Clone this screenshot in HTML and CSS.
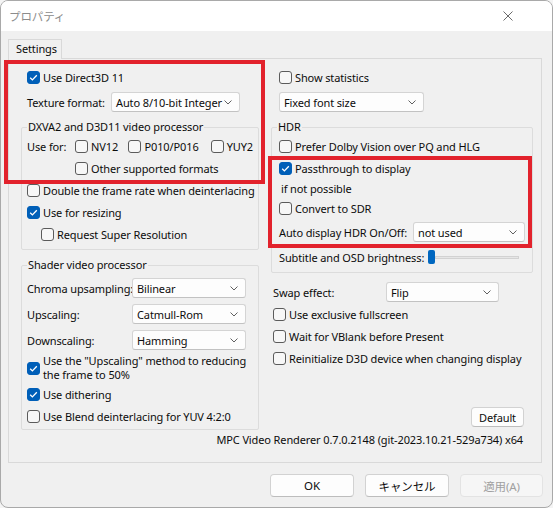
FILE: index.html
```html
<!DOCTYPE html>
<html>
<head>
<meta charset="utf-8">
<title>プロパティ</title>
<link rel="stylesheet" href="styles.css">
</head>
<body>
<div class="window">
	<div class="titlebar">
		<span class="title">プロパティ</span>
		<svg class="close" width="10" height="10" viewBox="0 0 10 10"><path d="M0.5 0.5 L9.5 9.5 M9.5 0.5 L0.5 9.5"/></svg>
	</div>

	<div class="client">
		<div class="tabs"><div class="tab">Settings</div></div>

		<div class="page">
			<div class="cols">

				<!-- left column: D3D11 + shader options -->
				<div class="col col-left">
					<div class="row row-top"><span class="cb on"><svg viewBox="0 0 13 13"><path d="M3.2 6.7 L5.4 8.9 L9.8 4.3"/></svg></span>Use Direct3D 11</div>
					<div class="row row-sel row-top row-tex">
						<span class="lbl lbl-tex">Texture format:</span>
						<span class="select sel-tex">Auto 8/10-bit Integer<svg viewBox="0 0 8 5"><path d="M0.5 0.5 L4 4 L7.5 0.5"/></svg></span>
					</div>

					<fieldset class="group group-dxva">
						<legend>DXVA2 and D3D11 video processor</legend>
						<div class="row">
							<span class="lbl lbl-use">Use for:</span>
							<span class="opt opt-nv"><span class="cb"></span>NV12</span>
							<span class="opt opt-p010"><span class="cb"></span>P010/P016</span>
							<span class="opt"><span class="cb"></span>YUY2</span>
						</div>
						<div class="row row-other"><span class="cb"></span>Other supported formats</div>
						<div class="row"><span class="cb"></span>Double the frame rate when deinterlacing</div>
						<div class="row"><span class="cb on"><svg viewBox="0 0 13 13"><path d="M3.2 6.7 L5.4 8.9 L9.8 4.3"/></svg></span>Use for resizing</div>
						<div class="row row-sub"><span class="cb"></span>Request Super Resolution</div>
					</fieldset>

					<fieldset class="group group-shader">
						<legend>Shader video processor</legend>
						<div class="row row-sel">
							<span class="lbl lbl-shader">Chroma upsampling:</span>
							<span class="select sel-shader">Bilinear<svg viewBox="0 0 8 5"><path d="M0.5 0.5 L4 4 L7.5 0.5"/></svg></span>
						</div>
						<div class="row row-sel">
							<span class="lbl lbl-shader">Upscaling:</span>
							<span class="select sel-shader">Catmull-Rom<svg viewBox="0 0 8 5"><path d="M0.5 0.5 L4 4 L7.5 0.5"/></svg></span>
						</div>
						<div class="row row-sel">
							<span class="lbl lbl-shader">Downscaling:</span>
							<span class="select sel-shader">Hamming<svg viewBox="0 0 8 5"><path d="M0.5 0.5 L4 4 L7.5 0.5"/></svg></span>
						</div>
						<div class="row row-wrap"><span class="cb on"><svg viewBox="0 0 13 13"><path d="M3.2 6.7 L5.4 8.9 L9.8 4.3"/></svg></span><span>Use the "Upscaling" method to reducing<br>the frame to 50%</span></div>
						<div class="row"><span class="cb on"><svg viewBox="0 0 13 13"><path d="M3.2 6.7 L5.4 8.9 L9.8 4.3"/></svg></span>Use dithering</div>
						<div class="row"><span class="cb"></span>Use Blend deinterlacing for YUV 4:2:0</div>
					</fieldset>
				</div>

				<!-- right column: stats, HDR, swap chain -->
				<div class="col col-right">
					<div class="row row-top"><span class="cb"></span>Show statistics</div>
					<div class="row row-sel row-top row-tex">
						<span class="select sel-font">Fixed font size<svg viewBox="0 0 8 5"><path d="M0.5 0.5 L4 4 L7.5 0.5"/></svg></span>
					</div>

					<fieldset class="group group-hdr">
						<legend>HDR</legend>
						<div class="row"><span class="cb"></span>Prefer Dolby Vision over PQ and HLG</div>
						<div class="row"><span class="cb on"><svg viewBox="0 0 13 13"><path d="M3.2 6.7 L5.4 8.9 L9.8 4.3"/></svg></span>Passthrough to display</div>
						<div class="row row-note">if not possible</div>
						<div class="row"><span class="cb"></span>Convert to SDR</div>
						<div class="row row-sel">
							<span class="lbl lbl-hdr">Auto display HDR On/Off:</span>
							<span class="select sel-hdr">not used<svg viewBox="0 0 8 5"><path d="M0.5 0.5 L4 4 L7.5 0.5"/></svg></span>
						</div>
						<div class="row row-slider">
							<span class="lbl lbl-osd">Subtitle and OSD brightness:</span>
							<span class="slider"><span class="thumb"></span><span class="track"></span></span>
						</div>
					</fieldset>

					<div class="row row-low row-swap">
						<span class="lbl lbl-swap">Swap effect:</span>
						<span class="select sel-swap">Flip<svg viewBox="0 0 8 5"><path d="M0.5 0.5 L4 4 L7.5 0.5"/></svg></span>
					</div>
					<div class="row row-low"><span class="cb"></span>Use exclusive fullscreen</div>
					<div class="row row-low"><span class="cb"></span>Wait for VBlank before Present</div>
					<div class="row row-low"><span class="cb"></span>Reinitialize D3D device when changing display</div>

					<div class="default-row"><button class="btn btn-default">Default</button></div>
				</div>
			</div>

			<div class="version">MPC Video Renderer 0.7.0.2148 (git-2023.10.21-529a734) x64</div>
		</div>

		<div class="buttons">
			<button class="btn btn-dlg">OK</button>
			<button class="btn btn-dlg">キャンセル</button>
			<button class="btn btn-dlg btn-apply" disabled>適用(A)</button>
		</div>
	</div>

	<!-- highlight boxes -->
	<div class="mark mark-left"></div>
	<div class="mark mark-right"></div>
</div>
</body>
</html>
```

FILE: styles.css
```css
* {
	box-sizing: border-box;
}
html, body {
	margin: 0;
	padding: 0;
}
body {
	width: 553px;
	height: 508px;
	background: #f4f4f4;
	font-family: "Noto Sans", "Noto Sans CJK JP", sans-serif;
	font-size: 11px;
	letter-spacing: -0.12px;
	color: #0c0c0c;
}

.window {
	position: relative;
	width: 553px;
	height: 508px;
	border: 1px solid #a9a9a9;
	border-radius: 8px;
	background: #f0f0f0;
	overflow: hidden;
	display: flex;
	flex-direction: column;
}

.titlebar {
	height: 30px;
	background: #fff;
	display: flex;
	align-items: center;
	justify-content: space-between;
	padding: 0 39px 0 8px;
}
.title {
	color: #8c8c8c;
	font-size: 11.5px;
}
.close path {
	stroke: #6a6a6a;
	stroke-width: 1;
	fill: none;
}

.client {
	flex: 1;
	padding: 8px 10px 0 7px;
}

.tabs {
	display: flex;
	position: relative;
	z-index: 1;
	margin-bottom: -1px;
}
.tab {
	height: 20px;
	width: 54px;
	padding-left: 7px;
	line-height: 18px;
	border: 1px solid #d9d9d9;
	border-bottom: none;
	background: #f0f0f0;
}

.page {
	height: 405px;
	border: 1px solid #d9d9d9;
	padding: 7px 0 12px 0;
}

.cols {
	display: grid;
	grid-template-columns: 238px 262px;
	column-gap: 12px;
	padding-left: 12px;
}
.col {
	display: flex;
	flex-direction: column;
}
.col-right {
	padding-bottom: 3px;
}

.row {
	display: flex;
	align-items: center;
	height: 22px;
	white-space: nowrap;
}
.row-sel {
	height: 26px;
}
.col-left > .row-top {
	padding-left: 6px;
}
.col-right > .row-top {
	padding-left: 8px;
}
.row-tex {
	margin-top: 1px;
}
.row-low {
	padding-left: 2px;
}
.row-swap {
	margin-top: 8px;
}
.row-other {
	padding-left: 48px;
}
.row-sub {
	padding-left: 14px;
}
.row-note {
	height: 18px;
	padding-left: 2px;
}
.row-slider {
	height: 24px;
}
.row-wrap {
	height: 30px;
	line-height: 14px;
}

/* checkbox */
.cb {
	flex: none;
	width: 13px;
	height: 13px;
	margin-right: 3px;
	border: 1px solid #5b5b5b;
	border-radius: 3px;
	background: #f7f7f7;
}
.cb svg {
	display: block;
	width: 13px;
	height: 13px;
	margin: -1px;
}
.cb svg path {
	fill: none;
	stroke: #fff;
	stroke-width: 1.3;
}
.cb.on {
	background: #005fb8;
	border-color: #005fb8;
}

.opt {
	display: flex;
	align-items: center;
}
.opt-nv {
	width: 54px;
}
.opt-p010 {
	width: 83px;
}

.lbl {
	flex: none;
}
.lbl-tex {
	width: 84px;
}
.lbl-use {
	width: 48px;
}
.lbl-shader {
	width: 105px;
}
.lbl-hdr {
	width: 134px;
}
.lbl-osd {
	width: 149px;
}
.lbl-swap {
	width: 113px;
}

/* combo boxes */
.select {
	height: 20px;
	display: flex;
	align-items: center;
	justify-content: space-between;
	padding: 0 7px 0 4px;
	background: #fdfdfd;
	border: 1px solid #d4d4d4;
	border-bottom-color: #c2c2c2;
	border-radius: 3px;
}
.select svg {
	width: 8px;
	height: 5px;
}
.select svg path {
	fill: none;
	stroke: #606060;
	stroke-width: 1;
}
.sel-tex {
	width: 129px;
}
.sel-shader {
	width: 114px;
}
.sel-font {
	width: 145px;
}
.sel-hdr {
	width: 113px;
}
.sel-swap {
	width: 113px;
}

.slider {
	display: flex;
	align-items: center;
	width: 91px;
	height: 14px;
}
.thumb {
	width: 7px;
	height: 14px;
	background: #0067c0;
	border-radius: 2px;
}
.track {
	flex: 1;
	height: 3px;
	background: #e6e6e6;
	border: 1px solid #d2d2d2;
}

/* group boxes */
.group {
	margin: 0;
	min-width: 0;
	border: 1px solid #dcdcdc;
	border-radius: 2px;
}
.group legend {
	padding: 0 1px;
	line-height: 16px;
}
.group-dxva {
	margin-top: 4px;
	padding: 0 5px 4px 5px;
}
.group-shader {
	margin-top: 7px;
	padding: 2px 5px 2px 5px;
}
.group-hdr {
	margin-top: 4px;
	padding: 0 7px 3px 7px;
}
.group-hdr legend {
	margin-left: -2px;
}

.default-row {
	margin-top: auto;
	display: flex;
	justify-content: flex-end;
	padding-right: 9px;
}

.btn {
	font-family: "Noto Sans", "Noto Sans CJK JP", sans-serif;
	font-size: 11px;
	letter-spacing: -0.12px;
	color: #0c0c0c;
	background: #fdfdfd;
	border: 1px solid #d2d2d2;
	border-bottom-color: #bdbdbd;
	border-radius: 4px;
	padding: 0;
}
.btn-default {
	width: 53px;
	height: 20px;
}

.version {
	height: 20px;
	line-height: 20px;
	text-align: right;
	padding-right: 18px;
}

.buttons {
	display: flex;
	justify-content: flex-end;
	gap: 11px;
	margin-top: 11px;
	margin-right: -1px;
}
.btn-dlg {
	width: 84px;
	height: 23px;
	font-size: 11.5px;
}
.btn-apply {
	width: 83px;
	color: #a0a0a0;
	background: #f6f6f6;
	border-color: #e3e3e3;
}

/* red highlight frames drawn over the dialog */
.mark {
	position: absolute;
	border: 4px solid #e2222c;
}
.mark-left {
	left: 3px;
	top: 59px;
	width: 261px;
	height: 124px;
}
.mark-right {
	left: 267px;
	top: 155px;
	width: 264px;
	height: 92px;
}
```
